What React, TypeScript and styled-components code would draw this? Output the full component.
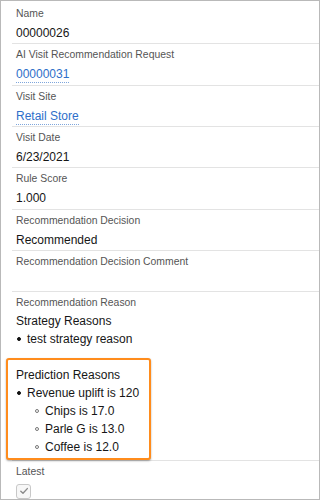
import React from 'react';
import styled, { createGlobalStyle } from "styled-components";

const GlobalStyle = createGlobalStyle`
    body {
        margin: 0;
        font-family: "Liberation Sans", Arial, sans-serif;
        background: #fff;
    }
`

type FieldProps = {
    label: string
    children?: React.ReactNode
}

const Field = ({label, children}: FieldProps) => {
    return (
        <StyledField>
            <Label>{label}</Label>
            <Value>{children}</Value>
        </StyledField>
    );
};

const App = () => {
    return (
        <>
            <GlobalStyle/>
            <Panel>
                <Field label="Name">00000026</Field>
                <Field label="AI Visit Recommendation Request">
                    <Link href="#">00000031</Link>
                </Field>
                <Field label="Visit Site">
                    <Link href="#">Retail Store</Link>
                </Field>
                <Field label="Visit Date">6/23/2021</Field>
                <Field label="Rule Score">1.000</Field>
                <Field label="Recommendation Decision">Recommended</Field>
                <Field label="Recommendation Decision Comment"/>
                <StyledField>
                    <Label>Recommendation Reason</Label>
                    <Rich>
                        <div>Strategy Reasons</div>
                        <List>
                            <Item><Dot/>test strategy reason</Item>
                        </List>
                        <Highlight>
                            <div>Prediction Reasons</div>
                            <List>
                                <Item><Dot/>Revenue uplift is 120</Item>
                                <Item $nested><Dot $hollow/>Chips is 17.0</Item>
                                <Item $nested><Dot $hollow/>Parle G is 13.0</Item>
                                <Item $nested><Dot $hollow/>Coffee is 12.0</Item>
                            </List>
                        </Highlight>
                    </Rich>
                </StyledField>
                <LastField>
                    <Label>Latest</Label>
                    <Checkbox>
                        <svg width="10" height="10" viewBox="0 0 10 10">
                            <path d="M1.8 5.2 L4 7.3 L8.3 2.6" fill="none" stroke="#8a8a8a" strokeWidth="1.4"
                                  strokeLinecap="round" strokeLinejoin="round"/>
                        </svg>
                    </Checkbox>
                </LastField>
            </Panel>
        </>
    );
};

export default App;

const Panel = styled.div`
    box-sizing: border-box;
    width: 320px;
    height: 500px;
    border: 1px solid #b9b9b9;
    padding-top: 2px;
    overflow: hidden;
`
const StyledField = styled.div`
    margin-left: 11px;
    padding: 4px 0 0.33px 4px;
    border-bottom: 1px solid #e3e3e3;
`
const LastField = styled.div`
    margin-left: 11px;
    padding: 4px 0 0 4px;
`
const Label = styled.div`
    font-size: 10.4px;
    line-height: 14px;
    color: #555;
`
const Value = styled.div`
    margin-top: 2px;
    min-height: 20px;
    font-size: 12px;
    line-height: 20px;
    color: #161616;
`
const Link = styled.a`
    color: #2e6fca;
    text-decoration: none;
    border-bottom: 1px dotted #7ea6dc;
    padding-bottom: 1px;
`
const Rich = styled.div`
    margin-top: 2px;
    font-size: 12px;
    line-height: 18px;
    color: #161616;
`
const List = styled.ul`
    list-style: none;
    margin: 0;
    padding: 0;
`
const Item = styled.li<{ $nested?: boolean }>`
    display: flex;
    align-items: center;
    padding-left: ${p => p.$nested ? 18 : 0}px;
`
const Dot = styled.span<{ $hollow?: boolean }>`
    display: inline-block;
    box-sizing: border-box;
    width: 4px;
    height: 4px;
    margin: 0 6px 0 1px;
    border-radius: 50%;
    border: 1px solid ${p => p.$hollow ? '#777' : '#111'};
    background: ${p => p.$hollow ? 'transparent' : '#111'};
`
const Highlight = styled.div`
    width: 145px;
    box-sizing: border-box;
    margin: 10px 0 -1px -10px;
    padding: 6px 8px 2px 8px;
    border: 2px solid #ff8c1c;
    border-radius: 3px;
    box-shadow: 0 1px 2px rgba(0, 0, 0, 0.35);
    background: #fff;
`
const Checkbox = styled.span`
    display: flex;
    align-items: center;
    justify-content: center;
    box-sizing: border-box;
    width: 15px;
    height: 15px;
    margin-top: 5px;
    border: 1px solid #c8c8c8;
    border-radius: 3px;
    background: #f7f7f7;
`
